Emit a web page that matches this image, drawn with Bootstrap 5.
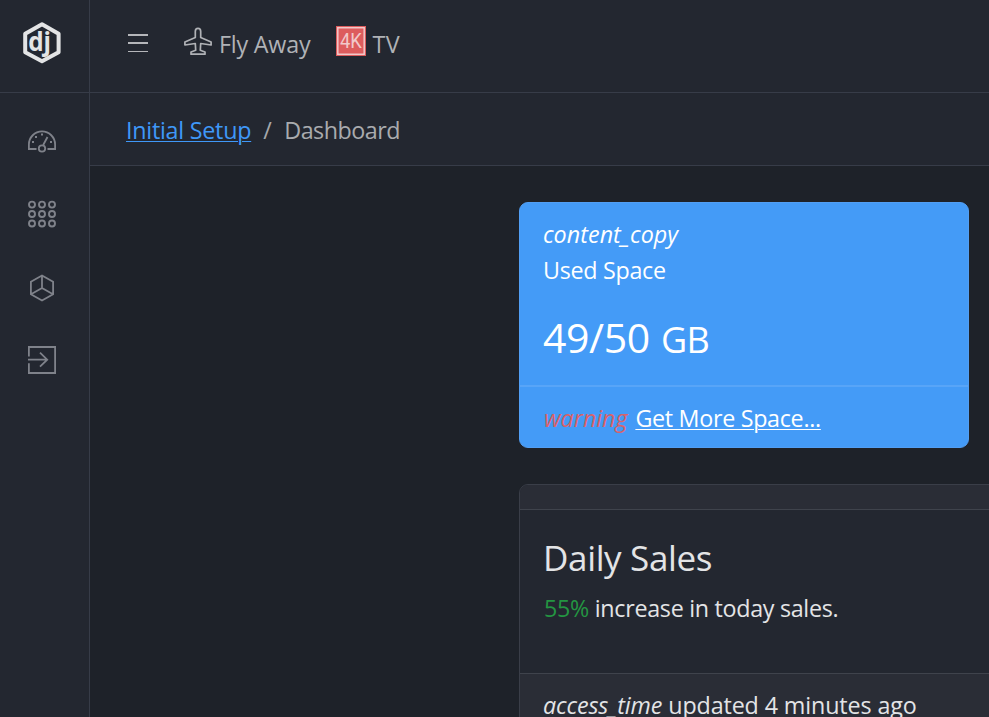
<!DOCTYPE html>
<html lang="en" data-bs-theme="dark">
<head>
<meta charset="utf-8">
<title>Dashboard</title>
<link href="https://cdn.jsdelivr.net/npm/bootstrap@5.3.0/dist/css/bootstrap.min.css" rel="stylesheet">
<style>
html{font-size:24px;overflow:hidden}
body{font-family:"Open Sans","Noto Sans",sans-serif;font-size:23.3px;line-height:36px;letter-spacing:-.2px;color:#e3e4e6;background:#1e2229;height:717px;overflow:hidden;white-space:nowrap}
.side-nav{width:90px;background:#232730;border-right:1px solid #373c48}
.brand-box{height:93px;border-bottom:1px solid #373c48}
.side-nav svg,.top-bar svg{display:block;flex:none}
.side-links{color:#7f828a;padding-top:11px}
.side-links a{height:73px;color:inherit;padding-left:24px}
.top-bar{height:93px;background:#232730;border-bottom:1px solid #373c48;color:#b0b2b6;padding-left:34px}
.plane-link{margin-left:30px}
.plane-label,.tv-label{margin-top:26px}
.plane-label{margin-left:3px}
.tv-link{margin-left:24px}
.tv-label{margin-left:2px;letter-spacing:.5px}
.crumb-bar{height:73px;background:#232730;border-bottom:1px solid #373c48;padding:2px 0 0 36px}
.crumb-bar .breadcrumb{--bs-breadcrumb-item-padding-x:12px;--bs-breadcrumb-divider-color:#a5a7ab}
.crumb-bar .active{color:#a9abae;letter-spacing:-.5px}
.crumb-bar .active::before{margin-right:1px}
.crumb-bar a{color:#3f98f8;letter-spacing:-.25px}
a{text-decoration-thickness:1px;text-underline-offset:2px}
.main-area{padding:36px 0 0 429px}
.tile{border-radius:9px;--bs-card-border-radius:9px;--bs-card-inner-border-radius:8px}
.space-tile{width:450px;height:246px;background:#449bf7;border:1px solid #529ff4;color:#fff}
.space-tile .card-header{padding:13px 23px 11px;height:182px;border:0;background:none;color:#fff}
.space-tile .card-footer{padding:13px 23px 11px 24px;background:none;border-top:2px solid #58a5f8}
.space-tile .card-footer a{margin-left:2px;letter-spacing:-.3px}
.copy-word{letter-spacing:.05px}
.used-word{letter-spacing:-.3px}
.space-title{font-size:41px;line-height:50px;letter-spacing:-.4px;margin:24px 0 0}
.space-title small{font-size:36px;margin-left:1px;letter-spacing:-.8px}
.sales-tile{width:600px;margin-top:36px;background:#232730;border:1px solid #3a3e48}
.sales-tile .card-header{height:25px;padding:0;background:#2a2d36;border-color:#3f434c}
.sales-tile .card-body{height:163px;padding:26px 24px 24px;flex:none}
.sales-tile .card-footer{padding:13px 23px 11px;background:#2a2d36;border-color:#3f434c;color:#e3e4e6;letter-spacing:-.12px}
.sales-title{font-size:35px;line-height:43px;letter-spacing:-.35px;margin:0 0 11px -1px;color:#e3e4e6}
.sales-note{letter-spacing:-.3px}
.warn{color:#d9626a;letter-spacing:-.05px}
.up{color:#249542}
</style>
<script src="https://cdn.jsdelivr.net/npm/bootstrap@5.3.0/dist/js/bootstrap.bundle.min.js"></script>
</head>
<body>
<div class="d-flex h-100">
<aside class="side-nav flex-shrink-0">
 <div class="brand-box">
  <svg width="89" height="92" viewBox="0 0 89 92"><path d="M42 24.3 58.6 33.700V52.300L42 61.300 25.200 52.300V33.700Z" fill="none" stroke="#e3e4e5" stroke-width="4" stroke-linejoin="round"/><text x="28.300" y="51" font-family="Open Sans,sans-serif" font-size="27" font-weight="700" textLength="22.500" lengthAdjust="spacingAndGlyphs" fill="#e3e4e5">dj</text></svg>
 </div>
 <nav class="side-links nav flex-column">
  <a href="#" class="d-flex align-items-center" aria-label="Dashboard"><svg width="36" height="36" viewBox="24 123 36 36" fill="none" stroke="currentColor" stroke-width="1.8"><path d="M36.500 149H28.900V144.500A13.100 13.100 0 0 1 55.100 144.500V149H47.500M43.200 145 47.500 137"/><circle cx="42" cy="148.500" r="3.200"/><path d="M32 142h2M35 137h2M41 134.500h2M50 142h2"/></svg></a>
  <a href="#" class="d-flex align-items-center" aria-label="Apps"><svg width="36" height="36" viewBox="24 196 36 36" fill="none" stroke="currentColor" stroke-width="1.9"><circle cx="32" cy="204.600" r="3"/><circle cx="42" cy="204.600" r="3"/><circle cx="52" cy="204.600" r="3"/><circle cx="32" cy="214" r="3"/><circle cx="42" cy="214" r="3"/><circle cx="52" cy="214" r="3"/><circle cx="32" cy="223.500" r="3"/><circle cx="42" cy="223.500" r="3"/><circle cx="52" cy="223.500" r="3"/></svg></a>
  <a href="#" class="d-flex align-items-center" aria-label="Models"><svg width="36" height="36" viewBox="24 269 36 36" fill="none" stroke="currentColor" stroke-width="1.8"><path d="M42 275.500 53.100 281.800V294.300L42 300.500 30.900 294.300V281.800ZM42 275.500V288L31 294.200M42 288 53 294.200"/></svg></a>
  <a href="#" class="d-flex align-items-center" aria-label="Log out"><svg width="36" height="36" viewBox="24 342 36 36" fill="none" stroke="currentColor" stroke-width="1.800"><path d="M28.900 356.500V347H55.100V373H28.900V363.200M28 359.700H47M40 352.700 47.200 359.700 40 366.700"/></svg></a>
 </nav>
</aside>
<div class="flex-grow-1 overflow-hidden">
 <header class="top-bar d-flex align-items-start">
  <svg width="28" height="92" viewBox="124 0 28 92" fill="#b5b6ba"><path d="M128 34h20v2h-20zM128 42h20v2h-20zM128 51h20v1h-20z"/></svg>
  <div class="plane-link d-flex">
   <svg width="34" height="92" viewBox="182 0 34 92" fill="none" stroke="#b0b2b6" stroke-width="1.700" stroke-linejoin="round"><path d="M195.300 37.500V31.500Q195.300 28.300 198 28.300Q200.700 28.300 200.700 31.500V37.500L211.100 42V45L200.700 43.500 200.300 50.300 205 52V54.200H191V52L195.700 50.300 195.300 43.500 184.900 45V42Z"/></svg>
   <span class="plane-label">Fly Away</span>
  </div>
  <div class="d-flex tv-link">
   <svg width="36" height="92" viewBox="334 0 36 92"><path fill="#dd5c5d" d="M336 26h30v30h-30z"/><path d="M337.800 27.800h26.400v26.400h-26.400z" fill="none" stroke="#f2c8c9" stroke-width="1.500"/><text x="340" y="48" font-family="Roboto,sans-serif" font-size="20" textLength="21.500" lengthAdjust="spacingAndGlyphs" fill="#f2c8c9">4K</text></svg>
   <span class="tv-label">TV</span>
  </div>
 </header>
 <div class="crumb-bar d-flex align-items-center"><ol class="breadcrumb mb-0"><li class="breadcrumb-item"><a href="#">Initial Setup</a></li><li class="breadcrumb-item active">Dashboard</li></ol></div>
 <main class="main-area">
  <section class="card tile space-tile">
   <div class="card-header"><i class="d-block copy-word">content_copy</i><p class="m-0 used-word">Used Space</p><h3 class="space-title fw-normal">49/50 <small>GB</small></h3></div>
   <div class="card-footer"><i class="warn">warning</i> <a class="text-white" href="#">Get More Space...</a></div>
  </section>
  <section class="card tile sales-tile">
   <div class="card-header"></div>
   <div class="card-body"><h4 class="sales-title fw-normal">Daily Sales</h4><p class="m-0 sales-note"><span class="up">55%</span> increase in today sales.</p></div>
   <div class="card-footer"><i>access_time</i> updated 4 minutes ago</div>
  </section>
 </main>
</div>
</div>
</body>
</html>
